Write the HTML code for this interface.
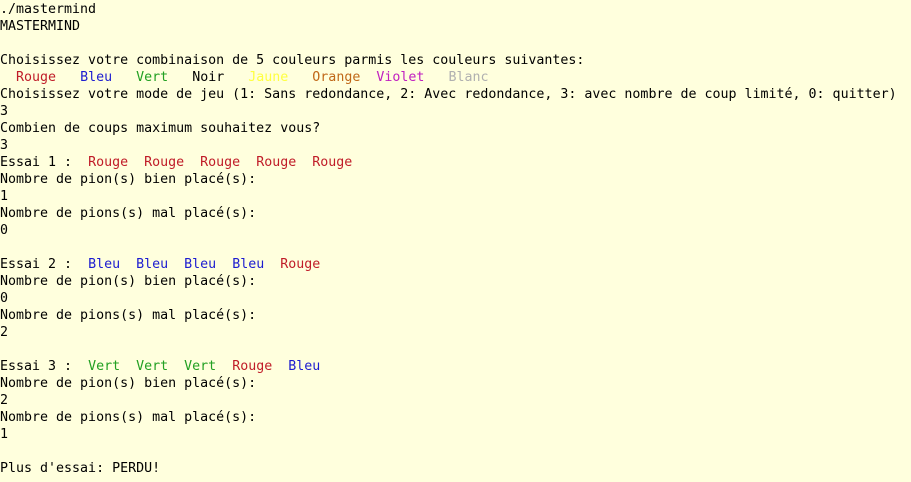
<!DOCTYPE html>
<html><head><meta charset="utf-8"><style>
html,body{margin:0;padding:0;background:#ffffdd;width:911px;height:482px;overflow:hidden}
pre{margin:0;padding:0;font-family:"DejaVu Sans Mono","Liberation Mono",monospace;font-size:13.3px;line-height:17px;color:#000;position:relative;top:1px}
.r{color:#c01c28}.b{color:#1c1cd0}.g{color:#22a022}.y{color:#ffff40}.o{color:#c06818}.v{color:#c020c0}.w{color:#b0b0b0}
</style></head><body><pre>./mastermind
MASTERMIND

Choisissez votre combinaison de 5 couleurs parmis les couleurs suivantes:
  <span class="r">Rouge</span>   <span class="b">Bleu</span>   <span class="g">Vert</span>   Noir   <span class="y">Jaune</span>   <span class="o">Orange</span>  <span class="v">Violet</span>   <span class="w">Blanc</span>
Choisissez votre mode de jeu (1: Sans redondance, 2: Avec redondance, 3: avec nombre de coup limité, 0: quitter)
3
Combien de coups maximum souhaitez vous?
3
Essai 1 :  <span class="r">Rouge</span>  <span class="r">Rouge</span>  <span class="r">Rouge</span>  <span class="r">Rouge</span>  <span class="r">Rouge</span>
Nombre de pion(s) bien placé(s):
1
Nombre de pions(s) mal placé(s):
0

Essai 2 :  <span class="b">Bleu</span>  <span class="b">Bleu</span>  <span class="b">Bleu</span>  <span class="b">Bleu</span>  <span class="r">Rouge</span>
Nombre de pion(s) bien placé(s):
0
Nombre de pions(s) mal placé(s):
2

Essai 3 :  <span class="g">Vert</span>  <span class="g">Vert</span>  <span class="g">Vert</span>  <span class="r">Rouge</span>  <span class="b">Bleu</span>
Nombre de pion(s) bien placé(s):
2
Nombre de pions(s) mal placé(s):
1

Plus d'essai: PERDU!
</pre></body></html>
